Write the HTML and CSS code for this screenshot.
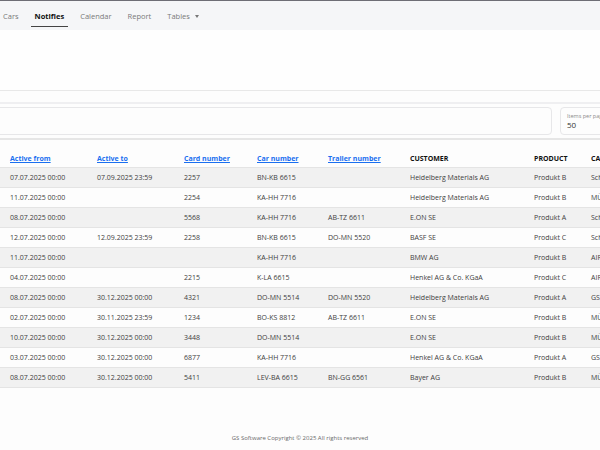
FILE: index.html
```html
<!DOCTYPE html>
<html lang="en">
<head>
    <meta charset="UTF-8">
    <meta name="viewport" content="width=device-width, initial-scale=1.0">
    <title>Notifies</title>
    <link rel="stylesheet" href="styles.css">
</head>
<body>

    <!-- Top navigation -->
    <nav class="topnav">
        <a class="nav-item">Cars</a>
        <a class="nav-item active">Notifies</a>
        <a class="nav-item">Calendar</a>
        <a class="nav-item">Report</a>
        <a class="nav-item dropdown">Tables <span class="caret"></span></a>
    </nav>

    <div class="page-head"></div>

    <!-- Filter bar -->
    <div class="filter-bar">
        <div class="filter-box search-box"></div>
        <div class="filter-box per-page">
            <span class="per-page-label">Items per page</span>
            <span class="per-page-value">50</span>
        </div>
    </div>

    <!-- Notifies table -->
    <table class="notify-table">
        <colgroup>
            <col style="width: 87px">
            <col style="width: 87px">
            <col style="width: 73px">
            <col style="width: 71px">
            <col style="width: 82px">
            <col style="width: 124px">
            <col style="width: 57px">
            <col style="width: 100px">
        </colgroup>
        <thead>
            <tr>
                <th><a class="sort-link">Active from</a></th>
                <th><a class="sort-link">Active to</a></th>
                <th><a class="sort-link">Card number</a></th>
                <th><a class="sort-link">Car number</a></th>
                <th><a class="sort-link">Trailer number</a></th>
                <th>CUSTOMER</th>
                <th>PRODUCT</th>
                <th>CARRIER</th>
            </tr>
        </thead>
        <tbody>
            <tr><td>07.07.2025 00:00</td><td>07.09.2025 23:59</td><td>2257</td><td>BN-KB 6615</td><td></td><td>Heidelberg Materials AG</td><td>Produkt B</td><td>Schenker AG</td></tr>
            <tr><td>11.07.2025 00:00</td><td></td><td>2254</td><td>KA-HH 7716</td><td></td><td>Heidelberg Materials AG</td><td>Produkt B</td><td>MÜLLER Logistik</td></tr>
            <tr><td>08.07.2025 00:00</td><td></td><td>5568</td><td>KA-HH 7716</td><td>AB-TZ 6611</td><td>E.ON SE</td><td>Produkt A</td><td>Schenker AG</td></tr>
            <tr><td>12.07.2025 00:00</td><td>12.09.2025 23:59</td><td>2258</td><td>BN-KB 6615</td><td>DO-MN 5520</td><td>BASF SE</td><td>Produkt C</td><td>Schenker AG</td></tr>
            <tr><td>11.07.2025 00:00</td><td></td><td></td><td>KA-HH 7716</td><td></td><td>BMW AG</td><td>Produkt B</td><td>AIRFRACHT</td></tr>
            <tr><td>04.07.2025 00:00</td><td></td><td>2215</td><td>K-LA 6615</td><td></td><td>Henkel AG &amp; Co. KGaA</td><td>Produkt C</td><td>AIRFRACHT</td></tr>
            <tr><td>08.07.2025 00:00</td><td>30.12.2025 00:00</td><td>4321</td><td>DO-MN 5514</td><td>DO-MN 5520</td><td>Heidelberg Materials AG</td><td>Produkt A</td><td>GS Transport</td></tr>
            <tr><td>02.07.2025 00:00</td><td>30.11.2025 23:59</td><td>1234</td><td>BO-KS 8812</td><td>AB-TZ 6611</td><td>E.ON SE</td><td>Produkt B</td><td>MÜLLER Logistik</td></tr>
            <tr><td>10.07.2025 00:00</td><td>30.12.2025 00:00</td><td>3448</td><td>DO-MN 5514</td><td></td><td>E.ON SE</td><td>Produkt B</td><td>MÜLLER Logistik</td></tr>
            <tr><td>03.07.2025 00:00</td><td>30.12.2025 00:00</td><td>6877</td><td>KA-HH 7716</td><td></td><td>Henkel AG &amp; Co. KGaA</td><td>Produkt A</td><td>GS Transport</td></tr>
            <tr><td>08.07.2025 00:00</td><td>30.12.2025 00:00</td><td>5411</td><td>LEV-BA 6615</td><td>BN-GG 6561</td><td>Bayer AG</td><td>Produkt B</td><td>MÜLLER Logistik</td></tr>
        </tbody>
    </table>

    <footer class="footer">GS Software Copyright © 2025 All rights reserved</footer>

</body>
</html>
```

FILE: styles.css
```css
/* Reset */
* {
    margin: 0;
    padding: 0;
    box-sizing: border-box;
}

html, body {
    overflow: hidden;
}

body {
    background-color: #fdfdfd;
    font-family: 'Open Sans', 'Noto Sans', sans-serif;
    font-size: 7px;
    color: #3a3a3a;
    width: 600px;
    height: 450px;
}

/* Top navigation */
.topnav {
    display: flex;
    align-items: flex-end;
    gap: 8px;
    height: 30px;
    margin-left: -1px;
    background-color: #f5f6f8;
    border-top: 1px solid #6e6e76;
}

.nav-item {
    display: block;
    padding: 0 4px 5px;
    font-size: 7.5px;
    line-height: 10px;
    color: #7a7a7a;
    border-bottom: 1px solid transparent;
    margin-bottom: 3px;
}

.nav-item.active {
    color: #111;
    font-weight: 700;
    border-bottom-color: #444;
}

.caret {
    display: inline-block;
    margin-left: 3px;
    vertical-align: 1px;
    border-left: 2.5px solid transparent;
    border-right: 2.5px solid transparent;
    border-top: 3px solid #777;
}

.page-head {
    height: 61px;
    border-bottom: 1px solid #e8e8e8;
    background-color: #fefefe;
}

/* Filter bar */
.filter-bar {
    display: flex;
    gap: 8px;
    margin-top: 11px;
    padding: 3px 0 3px;
    border-top: 2px solid #efeff1;
    border-bottom: 2px solid #e6e6e6;
    margin-left: -12px;
    width: 640px;
}

.filter-box {
    flex-shrink: 0;
    height: 28px;
    background-color: #fdfdfd;
    border: 1px solid #e7e7e9;
    border-radius: 4px;
}

.search-box {
    width: 564px;
}

.per-page {
    width: 60px;
    padding: 4px 6px;
    display: flex;
    flex-direction: column;
    white-space: nowrap;
    overflow: hidden;
}

.per-page-label {
    font-size: 5.5px;
    line-height: 8px;
    color: #8a8a8a;
}

.per-page-value {
    font-size: 8px;
    line-height: 10px;
    color: #333;
}

/* Table */
.notify-table {
    table-layout: fixed;
    width: 681px;
    border-collapse: collapse;
    margin-top: 11px;
}

.notify-table th {
    text-align: left;
    font-weight: 700;
    color: #111;
    height: 16px;
    padding: 0 0 0 10px;
    white-space: nowrap;
    vertical-align: middle;
}

.sort-link {
    color: #1a6ff0;
    text-decoration: underline;
}

.notify-table td {
    height: 20px;
    padding: 0 0 0 10px;
    white-space: nowrap;
    overflow: hidden;
    border-top: 1px solid #e4e4e4;
    color: #3d3d3d;
}

.notify-table tbody tr:nth-child(odd) {
    background-color: #f1f1f1;
}

.notify-table tbody tr:last-child td {
    border-bottom: 1px solid #e4e4e4;
}

/* Footer */
.footer {
    margin-top: 46px;
    text-align: center;
    font-size: 6px;
    color: #6a6a6a;
}
```
